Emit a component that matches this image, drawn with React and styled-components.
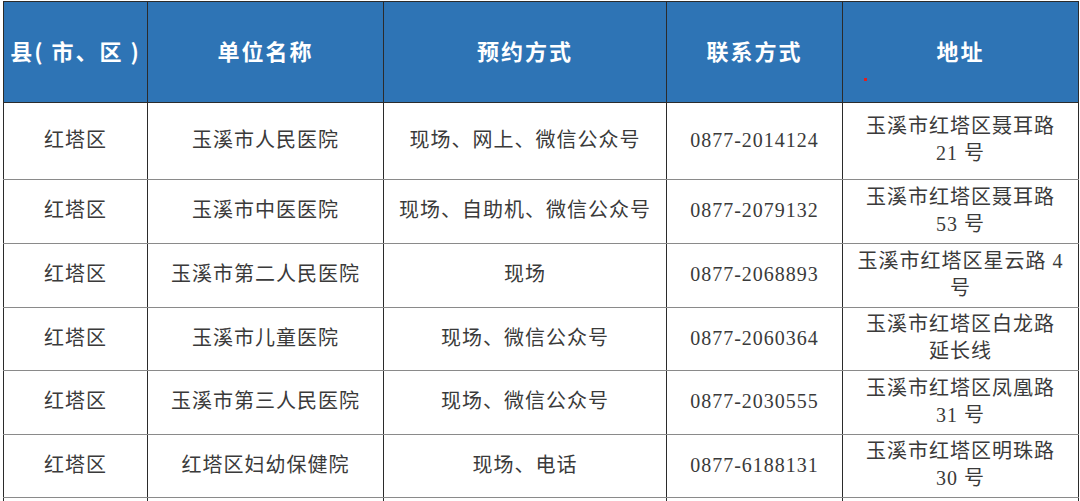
import React from 'react';
import styled, { createGlobalStyle } from 'styled-components';

const GlobalStyle = createGlobalStyle`
  html, body { margin: 0; padding: 0; background: #ffffff; }
  body { padding: 1px 0 0 3px; overflow: hidden; }
`;

const Table = styled.table`
  border-collapse: collapse;
  table-layout: fixed;
  width: 1075px;
  font-family: "Liberation Serif", "Noto Sans CJK SC", serif;
`;

const HeadCell = styled.th`
  position: relative;
  height: 96px;
  background: #2e74b5;
  color: #ffffff;
  border: 1px solid #2b2b2b;
  font-family: "Noto Sans CJK SC", "Noto Sans", sans-serif;
  font-size: 22px;
  font-weight: 700;
  letter-spacing: 2px;
  text-align: center;
  vertical-align: middle;
  padding: 0 0 4px;
`;

const Dot = styled.span`
  position: absolute;
  left: 21px;
  top: 76px;
  width: 3px;
  height: 3px;
  background: #e0201e;
`;

const Row = styled.tr`
  height: ${p => p.$h}px;
`;

const Cell = styled.td`
  border-top: 1px solid #8a8a8a;
  border-bottom: 1px solid #8a8a8a;
  border-left: 1px solid #2b2b2b;
  border-right: 1px solid #2b2b2b;
  color: #3a3a3a;
  font-size: 20px;
  letter-spacing: 1px;
  line-height: 27px;
  text-align: center;
  vertical-align: middle;
  padding: 0 4px 2px;
  white-space: nowrap;
`;

const cols = [144, 236, 283, 176, 236];
const heads = ['县( 市、区 )', '单位名称', '预约方式', '联系方式', '地址'];

const rows = [
  { h: 77, name: '玉溪市人民医院', way: '现场、网上、微信公众号', tel: '0877-2014124', addr: ['玉溪市红塔区聂耳路', '21 号'] },
  { h: 64, name: '玉溪市中医医院', way: '现场、自助机、微信公众号', tel: '0877-2079132', addr: ['玉溪市红塔区聂耳路', '53 号'] },
  { h: 64, name: '玉溪市第二人民医院', way: '现场', tel: '0877-2068893', addr: ['玉溪市红塔区星云路 4', '号'] },
  { h: 63, name: '玉溪市儿童医院', way: '现场、微信公众号', tel: '0877-2060364', addr: ['玉溪市红塔区白龙路', '延长线'] },
  { h: 64, name: '玉溪市第三人民医院', way: '现场、微信公众号', tel: '0877-2030555', addr: ['玉溪市红塔区凤凰路', '31 号'] },
  { h: 63, name: '红塔区妇幼保健院', way: '现场、电话', tel: '0877-6188131', addr: ['玉溪市红塔区明珠路', '30 号'] },
];

export default function App() {
  return (
    <>
      <GlobalStyle />
      <Table>
        <colgroup>
          {cols.map((w, i) => <col key={i} style={{ width: w }} />)}
        </colgroup>
        <thead>
          <tr>
            {heads.map((h, i) => (
              <HeadCell key={i}>
                {h}
                {i === 4 && <Dot />}
              </HeadCell>
            ))}
          </tr>
        </thead>
        <tbody>
          {rows.map((r, i) => (
            <Row key={i} $h={r.h}>
              <Cell>红塔区</Cell>
              <Cell>{r.name}</Cell>
              <Cell>{r.way}</Cell>
              <Cell>{r.tel}</Cell>
              <Cell>{r.addr[0]}<br />{r.addr[1]}</Cell>
            </Row>
          ))}
          <Row $h={63}>
            <Cell />
            <Cell />
            <Cell />
            <Cell />
            <Cell />
          </Row>
        </tbody>
      </Table>
    </>
  );
}
